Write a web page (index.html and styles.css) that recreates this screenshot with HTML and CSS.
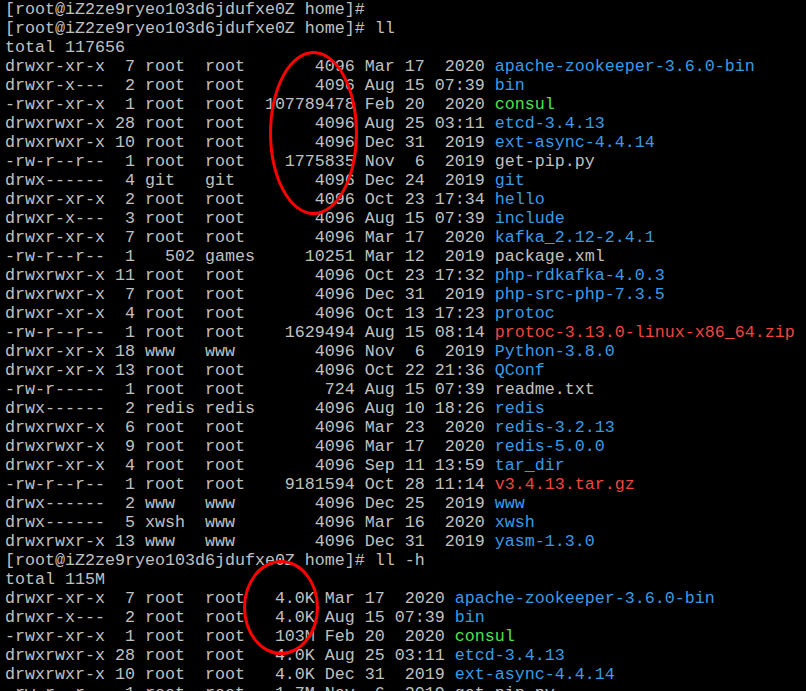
FILE: index.html
```html
<!DOCTYPE html>
<html lang="en">
<head>
  <meta charset="UTF-8">
  <title>home - ll</title>
  <link rel="stylesheet" href="styles.css">
</head>
<body>
  <div class="terminal">
<pre class="screen">[root@iZ2ze9ryeo103d6jdufxe0Z home]#
[root@iZ2ze9ryeo103d6jdufxe0Z home]# ll
total 117656
drwxr-xr-x  7 root  root       4096 Mar 17  2020 <span class="dir">apache-zookeeper-3.6.0-bin</span>
drwxr-x---  2 root  root       4096 Aug 15 07:39 <span class="dir">bin</span>
-rwxr-xr-x  1 root  root  107789478 Feb 20  2020 <span class="exe">consul</span>
drwxrwxr-x 28 root  root       4096 Aug 25 03:11 <span class="dir">etcd-3.4.13</span>
drwxrwxr-x 10 root  root       4096 Dec 31  2019 <span class="dir">ext-async-4.4.14</span>
-rw-r--r--  1 root  root    1775835 Nov  6  2019 get-pip.py
drwx------  4 git   git        4096 Dec 24  2019 <span class="dir">git</span>
drwxr-xr-x  2 root  root       4096 Oct 23 17:34 <span class="dir">hello</span>
drwxr-x---  3 root  root       4096 Aug 15 07:39 <span class="dir">include</span>
drwxr-xr-x  7 root  root       4096 Mar 17  2020 <span class="dir">kafka_2.12-2.4.1</span>
-rw-r--r--  1   502 games     10251 Mar 12  2019 package.xml
drwxrwxr-x 11 root  root       4096 Oct 23 17:32 <span class="dir">php-rdkafka-4.0.3</span>
drwxrwxr-x  7 root  root       4096 Dec 31  2019 <span class="dir">php-src-php-7.3.5</span>
drwxr-xr-x  4 root  root       4096 Oct 13 17:23 <span class="dir">protoc</span>
-rw-r--r--  1 root  root    1629494 Aug 15 08:14 <span class="arc">protoc-3.13.0-linux-x86_64.zip</span>
drwxr-xr-x 18 www   www        4096 Nov  6  2019 <span class="dir">Python-3.8.0</span>
drwxr-xr-x 13 root  root       4096 Oct 22 21:36 <span class="dir">QConf</span>
-rw-r-----  1 root  root        724 Aug 15 07:39 readme.txt
drwx------  2 redis redis      4096 Aug 10 18:26 <span class="dir">redis</span>
drwxrwxr-x  6 root  root       4096 Mar 23  2020 <span class="dir">redis-3.2.13</span>
drwxrwxr-x  9 root  root       4096 Mar 17  2020 <span class="dir">redis-5.0.0</span>
drwxr-xr-x  4 root  root       4096 Sep 11 13:59 <span class="dir">tar_dir</span>
-rw-r--r--  1 root  root    9181594 Oct 28 11:14 <span class="arc">v3.4.13.tar.gz</span>
drwx------  2 www   www        4096 Dec 25  2019 <span class="dir">www</span>
drwx------  5 xwsh  www        4096 Mar 16  2020 <span class="dir">xwsh</span>
drwxrwxr-x 13 www   www        4096 Dec 31  2019 <span class="dir">yasm-1.3.0</span>
[root@iZ2ze9ryeo103d6jdufxe0Z home]# ll -h
total 115M
drwxr-xr-x  7 root  root   4.0K Mar 17  2020 <span class="dir">apache-zookeeper-3.6.0-bin</span>
drwxr-x---  2 root  root   4.0K Aug 15 07:39 <span class="dir">bin</span>
-rwxr-xr-x  1 root  root   103M Feb 20  2020 <span class="exe">consul</span>
drwxrwxr-x 28 root  root   4.0K Aug 25 03:11 <span class="dir">etcd-3.4.13</span>
drwxrwxr-x 10 root  root   4.0K Dec 31  2019 <span class="dir">ext-async-4.4.14</span>
-rw-r--r--  1 root  root   1.7M Nov  6  2019 get-pip.py</pre>
    <div class="mark mark-bytes"></div>
    <div class="mark mark-human"></div>
  </div>
</body>
</html>
```
FILE: styles.css
```css
html, body {
  margin: 0;
  background-color: #000;
  height: 100%;
  overflow: hidden;
}
.terminal {
  position: relative;
  padding: 0 0 0 5px;
}
.screen {
  margin: 0;
  font-family: "Liberation Mono", "Courier New", monospace;
  font-size: 16.667px;
  line-height: 19px;
  color: #c0c0c0;
}
.dir {
  color: #3a9be6;
}
.exe {
  color: #4fe04f;
}
.arc {
  color: #ef4640;
}
.mark {
  position: absolute;
  border: 3px solid #f00;
  border-radius: 50%;
}
.mark-bytes {
  left: 269px;
  top: 51px;
  width: 83px;
  height: 158px;
}
.mark-human {
  left: 243px;
  top: 560px;
  width: 70px;
  height: 89px;
}
```
